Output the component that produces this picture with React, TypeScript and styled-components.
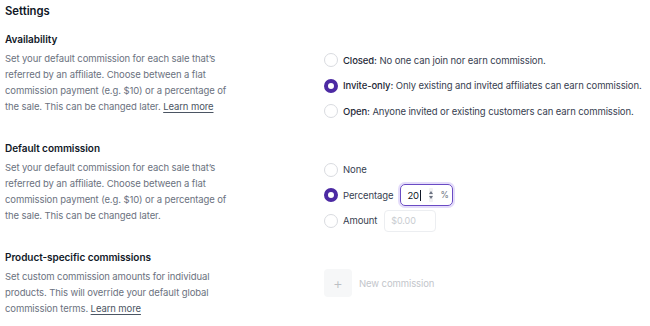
import React from "react";
import styled, { createGlobalStyle } from "styled-components";

const Global = createGlobalStyle`
  html, body { margin: 0; padding: 0; background: #ffffff; }
  body { font-family: Inter, "Noto Sans", sans-serif; color: #111827; -webkit-font-smoothing: antialiased; }
  * { box-sizing: border-box; }
`;

const Page = styled.div`
  padding: 2px 5px 0 5px;
  width: 650px;
`;

const Title = styled.h1`
  margin: 0 0 11px 0;
  font-size: 11.3px;
  line-height: 18px;
  font-weight: 600;
  color: #111827;
`;

const Section = styled.section`
  display: grid;
  grid-template-columns: 319px 1fr;
  align-items: start;
  margin-bottom: 17.5px;
`;

const Info = styled.div`
  display: flex;
  flex-direction: column;
  gap: 4px;
`;

const Heading = styled.h2`
  margin: 0;
  font-size: 10px;
  letter-spacing: -0.05px;
  line-height: 16px;
  font-weight: 600;
  color: #111827;
`;

const Desc = styled.p`
  margin: 0;
  width: 232px;
  font-size: 9.5px;
  letter-spacing: -0.1px;
  line-height: 16px;
  color: #6b7280;
`;

const Link = styled.a`
  color: #4b5563;
  text-decoration: underline;
  text-underline-offset: 2px;
`;

const Options = styled.div<{ $top?: number }>`
  display: flex;
  flex-direction: column;
  gap: 3.5px;
  padding-top: ${(p) => p.$top ?? 18}px;
`;

const Row = styled.label`
  display: flex;
  align-items: center;
  height: 22px;
  gap: 5px;
  font-size: 9.5px;
  letter-spacing: -0.1px;
  color: #374151;
`;

const Radio = styled.span<{ $checked?: boolean }>`
  width: 14px;
  height: 14px;
  border-radius: 50%;
  flex: none;
  background: #fff;
  border: ${(p) => (p.$checked ? "4px solid #4c2aa3" : "1px solid #d9dbe0")};
`;

const Strong = styled.span`
  font-weight: 500;
  color: #1f2937;
`;

const Label = styled.span`
  margin-right: 2px;
`;

const PercentBox = styled.div`
  display: flex;
  align-items: center;
  width: 53px;
  height: 22px;
  padding: 0 6px 0 6px;
  border: 1.5px solid #6a4bc4;
  border-radius: 5px;
  box-shadow: 0 0 0 2px #e4dcfa;
  font-size: 9.5px;
  color: #111827;
`;

const Value = styled.span`
  display: flex;
  align-items: center;
  &::after {
    content: "";
    display: inline-block;
    width: 1px;
    height: 11px;
    background: #111827;
    margin-left: 0.5px;
  }
`;

const Spinner = styled.span`
  display: flex;
  flex-direction: column;
  align-items: center;
  justify-content: center;
  gap: 2px;
  width: 8px;
  height: 14px;
  margin-left: 8px;
  background: #f1f1f3;
  border-radius: 1px;
`;

const Tri = styled.span<{ $down?: boolean }>`
  width: 0;
  height: 0;
  border-left: 2px solid transparent;
  border-right: 2px solid transparent;
  ${(p) => (p.$down ? "border-top: 3px solid #6b7280;" : "border-bottom: 3px solid #6b7280;")}
`;

const Unit = styled.span`
  margin-left: 8px;
  color: #6b7280;
  font-size: 8.5px;
`;

const AmountBox = styled.div`
  display: flex;
  align-items: center;
  width: 52px;
  height: 22px;
  padding: 0 6px;
  border: 1px solid #eceef1;
  border-radius: 4px;
  font-size: 9px;
  color: #c9ccd1;
`;

const NewRow = styled.div`
  display: flex;
  align-items: center;
  gap: 7px;
  padding-top: 20px;
`;

const PlusBtn = styled.span`
  display: flex;
  align-items: center;
  justify-content: center;
  width: 28px;
  height: 28px;
  border-radius: 4px;
  background: #f6f7f8;
  color: #bcbfc4;
  font-size: 15px;
  font-weight: 300;
`;

const Muted = styled.span`
  font-size: 9.5px;
  letter-spacing: -0.1px;
  color: #c3c6cb;
`;

export default function App() {
  return (
    <Page>
      <Global />
      <Title>Settings</Title>

      <Section>
        <Info>
          <Heading>Availability</Heading>
          <Desc>
            Set your default commission for each sale that’s referred by an affiliate. Choose between a flat
            commission payment (e.g. $10) or a percentage of the sale. This can be changed later.{" "}
            <Link>Learn more</Link>
          </Desc>
        </Info>
        <Options>
          <Row>
            <Radio />
            <span>
              <Strong>Closed:</Strong> No one can join nor earn commission.
            </span>
          </Row>
          <Row>
            <Radio $checked />
            <span>
              <Strong>Invite-only:</Strong> Only existing and invited affiliates can earn commission.
            </span>
          </Row>
          <Row>
            <Radio />
            <span>
              <Strong>Open:</Strong> Anyone invited or existing customers can earn commission.
            </span>
          </Row>
        </Options>
      </Section>

      <Section>
        <Info>
          <Heading>Default commission</Heading>
          <Desc>
            Set your default commission for each sale that’s referred by an affiliate. Choose between a flat
            commission payment (e.g. $10) or a percentage of the sale. This can be changed later.
          </Desc>
        </Info>
        <Options $top={19}>
          <Row>
            <Radio />
            <Label>None</Label>
          </Row>
          <Row>
            <Radio $checked />
            <Label>Percentage</Label>
            <PercentBox>
              <Value>20</Value>
              <Spinner>
                <Tri />
                <Tri $down />
              </Spinner>
              <Unit>%</Unit>
            </PercentBox>
          </Row>
          <Row>
            <Radio />
            <Label>Amount</Label>
            <AmountBox>$0.00</AmountBox>
          </Row>
        </Options>
      </Section>

      <Section>
        <Info>
          <Heading>Product-specific commissions</Heading>
          <Desc>
            Set custom commission amounts for individual products. This will override your default global
            commission terms. <Link>Learn more</Link>
          </Desc>
        </Info>
        <NewRow>
          <PlusBtn>+</PlusBtn>
          <Muted>New commission</Muted>
        </NewRow>
      </Section>
    </Page>
  );
}
